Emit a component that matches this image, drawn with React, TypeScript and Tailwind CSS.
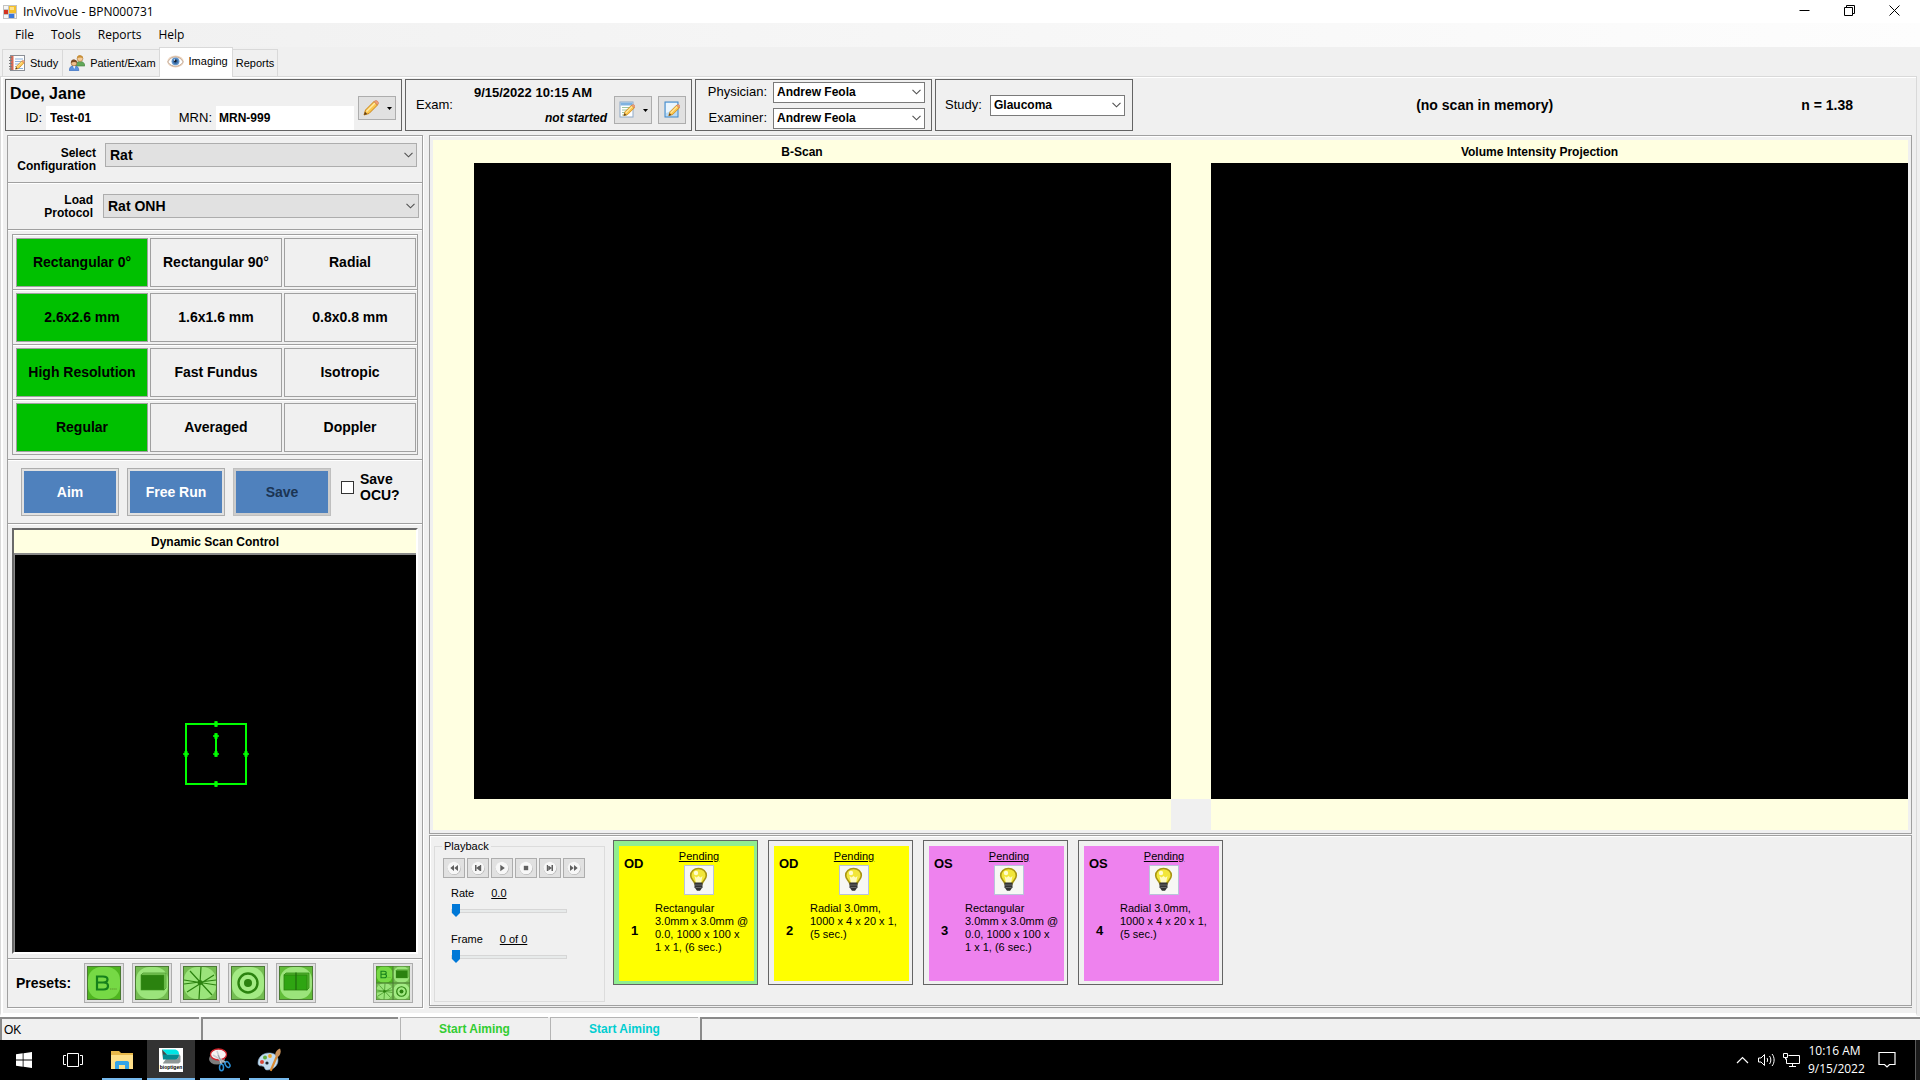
import React from "react";

const UI = "font-['Liberation_Sans',Arial,sans-serif]";
const SEGOE = "font-['Open_Sans','Noto_Sans',sans-serif]";

/* ---------- Icons ---------- */

function AppIcon() {
  return (
    <svg width="14" height="14" viewBox="0 0 14 14" aria-hidden="true">
      <rect width="14" height="14" fill="#c3c3c3" />
      <rect x="1" y="1" width="4" height="3" fill="#f6f6f6" />
      <rect x="1" y="10" width="4" height="3" fill="#f6f6f6" />
      <rect x="1" y="5" width="4" height="4" fill="#d3331f" />
      <rect x="6" y="1" width="7" height="7" fill="#f5c02b" />
      <rect x="7" y="2" width="4" height="3" fill="#ffe28a" />
      <rect x="6" y="9" width="5" height="4" fill="#3b78dd" />
      <rect x="12" y="9" width="1" height="4" fill="#f6f6f6" />
    </svg>
  );
}

function Pencil({ x = 0, y = 0, s = 1 }: { x?: number; y?: number; s?: number }) {
  return (
    <g transform={`translate(${x} ${y}) scale(${s})`}>
      <path d="M1 15l1.500-5L11 1.500 14.500 5 6 13.500z" fill="#fbc64d" stroke="#c98317" strokeWidth="1" strokeLinejoin="round" />
      <path d="M3.500 11.500L12 3" stroke="#ffeaa8" strokeWidth="1.400" />
      <path d="M11 1.500L14.500 5l1-1.600c.4-1-1.700-3.200-2.800-2.800z" fill="#f1a07a" stroke="#c9774b" strokeWidth=".6" />
      <path d="M1 15l1-3.200L4.200 14z" fill="#5a3d1c" />
    </g>
  );
}

function PencilIcon() {
  return (
    <svg width="16" height="16" viewBox="0 0 16 16" aria-hidden="true">
      <Pencil />
    </svg>
  );
}

function StudyIcon() {
  return (
    <svg width="16" height="16" viewBox="0 0 16 16" aria-hidden="true">
      <rect x="1.500" y=".5" width="14" height="15" fill="#fdfdfd" stroke="#8b8f96" />
      <rect x="2" y="1" width="2.500" height="14" fill="#d66a55" />
      <path d="M0 2.500h3M0 5.500h3M0 8.500h3M0 11.500h3M0 14h3" stroke="#7a7a7a" />
      <path d="M6 4h8M6 6.500h8M6 9h7M6 11.500h6M6 13.500h8" stroke="#7fa9d8" strokeWidth=".9" />
      <Pencil x={6} y={5} s={0.62} />
    </svg>
  );
}

function PeopleIcon() {
  return (
    <svg width="16" height="16" viewBox="0 0 16 16" aria-hidden="true">
      <path d="M6.500 11c0-3 1.500-4.500 4.500-4.500s4.800 1.500 4.800 4.500z" fill="#62a85a" stroke="#3f7d3a" strokeWidth=".6" />
      <circle cx="11" cy="3.600" r="2.900" fill="#f3cb98" stroke="#a8773c" strokeWidth=".6" />
      <path d="M8 3.500C8 .8 9.800.3 11 .3s3 .7 3 3c-1.500-1-4-1.300-6 .2z" fill="#c98f35" />
      <path d="M.3 15.700c0-3.500 1.600-5 4.700-5s4.800 1.500 4.800 5z" fill="#5a92e0" stroke="#2f62b5" strokeWidth=".6" />
      <path d="M4 11l1.200 3L6.500 11z" fill="#fff" />
      <circle cx="5" cy="8" r="2.900" fill="#f0bf8b" stroke="#8a5a2c" strokeWidth=".6" />
      <path d="M2 8c0-3 1.700-3.400 3-3.400s3 .6 3 3.200c-1.500-1-4-1.200-6 .2z" fill="#7a4a24" />
    </svg>
  );
}

function EyeIcon() {
  return (
    <svg width="17" height="13" viewBox="0 0 17 13" aria-hidden="true">
      <ellipse cx="8.500" cy="6.500" rx="8.200" ry="6" fill="#ecd3bd" />
      <path d="M.8 7C3 3.200 5.500 2 8.500 2s6 1.500 7.700 5c-2 3-4.700 4.200-7.700 4.200S2.800 10 .8 7z" fill="#fff" stroke="#b59a85" strokeWidth=".8" />
      <circle cx="8.500" cy="6.300" r="3.900" fill="#5f93c9" />
      <circle cx="8.500" cy="6.300" r="2.600" fill="#3d6ea8" />
      <circle cx="8.300" cy="6.100" r="1.400" fill="#0d1b2c" />
      <circle cx="7.400" cy="5" r=".7" fill="#fff" />
    </svg>
  );
}

function FormIcon({ blue = false }: { blue?: boolean }) {
  return (
    <svg width="16" height="18" viewBox="0 0 16 18" aria-hidden="true">
      <rect x="1" y="1" width="13" height="15" fill={blue ? "#b9dbf6" : "#fff"} stroke={blue ? "#3f87c9" : "#8faac8"} />
      {blue ? (
        <path d="M2 2h11v6L2 12z" fill="#eaf5fd" />
      ) : (
        <>
          <rect x="1.500" y="1.500" width="12" height="3" fill="#7fb2e0" />
          <path d="M3 6.500h9M3 9h9M3 11.500h7M3 14h5" stroke="#9cc4a0" />
        </>
      )}
      <Pencil x={4} y={3} s={0.78} />
    </svg>
  );
}

function DownCaret() {
  return (
    <svg width="5" height="3" viewBox="0 0 5 3" aria-hidden="true">
      <path d="M0 0h5L2.500 3z" fill="#000" />
    </svg>
  );
}

function Bulb() {
  return (
    <svg width="30" height="30" viewBox="0 0 30 30" aria-hidden="true">
      <rect width="30" height="30" fill="#b9c3da" />
      <rect width="28" height="28" x="1" y="1" fill="#f7f7f4" />
      <path d="M14.500 3.500c-4.600 0-7.800 3-7.800 7 0 3.700 3.600 5 4.300 8.500h7c.7-3.500 4.300-4.800 4.300-8.500 0-4-3.200-7-7.800-7z" fill="#f2e63a" stroke="#a89412" strokeWidth="1.600" />
      <path d="M12 18l-1.500-7 2 1.500 2-1.500 2 1.500 2-1.500L17 18z" fill="#fffbc0" />
      <circle cx="12" cy="8" r="2.200" fill="#fffcd0" />
      <path d="M10.500 17.500h8v4.800l-2.500 3.400h-3l-2.500-3.400z" fill="#333" />
      <path d="M11 20h7M11.500 22.500h6" stroke="#777" strokeWidth=".8" />
    </svg>
  );
}

type MediaKind = "rew" | "prev" | "play" | "stop" | "next" | "ff";

const mediaPaths: Record<MediaKind, string> = {
  rew: "M7 4v6L3.300 7zM11 4v6L7.300 7z",
  prev: "M4 4h1.500v6H4zM9 4v6L5.300 7zM8.800 4h1.400v6H8.800z",
  play: "M5.300 3.700v6.600L9.800 7z",
  stop: "M4.800 4.800h4.400v4.400H4.800z",
  next: "M10 4H8.500v6H10zM5 4v6L8.700 7zM3.800 4h1.400v6H3.800z",
  ff: "M7 4v6L10.700 7zM3 4v6L6.700 7z",
};

function MediaIcon({ kind }: { kind: MediaKind }) {
  return (
    <svg width="14" height="14" viewBox="0 0 14 14" aria-hidden="true">
      <circle cx="7.300" cy="7.500" r="6.500" fill="#b4b4b4" />
      <circle cx="7" cy="7" r="6.300" fill="#f7f7f7" />
      <path d={mediaPaths[kind]} fill="#606060" />
    </svg>
  );
}

/* ---------- Preset drawings, each on a 34 unit square ---------- */

function PresetBase({ bg, disc, children }: { bg: string; disc: string; children: React.ReactNode }) {
  return (
    <>
      <rect width="34" height="34" fill={bg} />
      <rect x="1" y="1" width="32" height="32" rx="13" fill={disc} />
      {children}
      <rect x=".5" y=".5" width="33" height="33" fill="none" stroke="#4a7a33" />
    </>
  );
}

function BArt() {
  return (
    <PresetBase bg="#4fb520" disc="#76d945">
      <path d="M10 10.500h6c6 0 6 6 0 6h-6zM10 16.500h6.500c6 0 6 7 0 7H10z" fill="none" stroke="#15801b" strokeWidth="2.200" />
      <path d="M23 23h7" stroke="#5e9a2c" strokeDasharray="1.500 .6" />
    </PresetBase>
  );
}

function VolumeArt() {
  return (
    <PresetBase bg="#74bd52" disc="#9be47b">
      <path d="M6 9l2-2h23v15l-2 2z" fill="#7dcc5b" stroke="#4f9a31" strokeWidth=".8" />
      <rect x="6" y="9" width="23" height="15" fill="#2b820f" stroke="#3f9320" strokeWidth=".6" />
    </PresetBase>
  );
}

function RadialArt() {
  return (
    <PresetBase bg="#74bd52" disc="#9be47b">
      <path d="M18 1l-2 32M7 5l22 24M31 9L4 26M1 14l32 5M1 18l32-4" stroke="#2b820f" strokeWidth="1.200" />
      <circle cx="17" cy="16.500" r="2.500" fill="#2b820f" />
    </PresetBase>
  );
}

function RingArt() {
  return (
    <PresetBase bg="#74bd52" disc="#a3ea84">
      <circle cx="17" cy="17" r="9.500" fill="none" stroke="#2b820f" strokeWidth="2.400" />
      <circle cx="17" cy="17" r="4" fill="#2b820f" />
    </PresetBase>
  );
}

function SplitArt() {
  return (
    <PresetBase bg="#62bd3a" disc="#9be47b">
      <path d="M5 9l2-2h23v15l-2 2z" fill="#54b52f" stroke="#2f8a12" strokeWidth=".8" />
      <rect x="5" y="9" width="23" height="15" fill="#2fa512" stroke="#2b820f" strokeWidth=".8" />
      <path d="M17 6.500V24" stroke="#1f6a0c" strokeWidth="1.200" />
    </PresetBase>
  );
}

function GridArt() {
  return (
    <>
      <svg x="0" y="0" width="17" height="17" viewBox="0 0 34 34"><BArt /></svg>
      <svg x="17" y="0" width="17" height="17" viewBox="0 0 34 34"><VolumeArt /></svg>
      <svg x="0" y="17" width="17" height="17" viewBox="0 0 34 34"><RadialArt /></svg>
      <svg x="17" y="17" width="17" height="17" viewBox="0 0 34 34"><RingArt /></svg>
    </>
  );
}

function PresetButton({ label, children }: { label: string; children: React.ReactNode }) {
  return (
    <button aria-label={label} className="flex size-10 items-center justify-center border border-[#adadad] bg-[#e1e1e1]">
      <svg width="34" height="34" viewBox="0 0 34 34" aria-hidden="true">{children}</svg>
    </button>
  );
}

/* ---------- Controls ---------- */

function DropDown({ id, value, look }: { id: string; value: string; look: "flat" | "field" }) {
  return (
    <div className="relative w-full">
      <select
        id={id}
        defaultValue={value}
        className={
          look === "flat"
            ? "block h-6 w-full appearance-none rounded-none border border-[#adadad] bg-[#e1e1e1] pl-1 pr-5 text-[14px] leading-[20px] font-bold text-black"
            : "block h-[21px] w-full appearance-none rounded-none border border-[#7a7a7a] bg-white pl-[3px] pr-5 text-[12px] leading-[16px] font-bold text-black"
        }
      >
        <option>{value}</option>
      </select>
      <svg className="pointer-events-none absolute inset-y-0 right-1 my-auto" width="9" height="6" viewBox="0 0 9 6" aria-hidden="true">
        <path d="M.5 .8l4 4 4-4" fill="none" stroke="#505050" strokeWidth="1.100" />
      </svg>
    </div>
  );
}

const SLIDER =
  "block h-[14px] w-[116px] appearance-none bg-transparent [&::-webkit-slider-runnable-track]:h-1 [&::-webkit-slider-runnable-track]:border [&::-webkit-slider-runnable-track]:border-[#d6d6d6] [&::-webkit-slider-runnable-track]:bg-[#e7eaea] [&::-webkit-slider-thumb]:-mt-[6px] [&::-webkit-slider-thumb]:h-[13px] [&::-webkit-slider-thumb]:w-2 [&::-webkit-slider-thumb]:appearance-none [&::-webkit-slider-thumb]:bg-[#0078d7] [&::-webkit-slider-thumb]:[clip-path:polygon(0_0,100%_0,100%_70%,50%_100%,0_70%)]";

const modeRows = [
  ["Rectangular 0°", "Rectangular 90°", "Radial"],
  ["2.6x2.6 mm", "1.6x1.6 mm", "0.8x0.8 mm"],
  ["High Resolution", "Fast Fundus", "Isotropic"],
  ["Regular", "Averaged", "Doppler"],
];

const mediaButtons: { kind: MediaKind; label: string }[] = [
  { kind: "rew", label: "Rewind" },
  { kind: "prev", label: "Previous frame" },
  { kind: "play", label: "Play" },
  { kind: "stop", label: "Stop" },
  { kind: "next", label: "Next frame" },
  { kind: "ff", label: "Fast forward" },
];

const rectScan = ["Rectangular", "3.0mm x 3.0mm @", "0.0, 1000 x 100 x", "1 x 1, (6 sec.)"];
const radialScan = ["Radial 3.0mm,", "1000 x 4 x 20 x 1,", "(5 sec.)"];

const scans = [
  { n: 1, eye: "OD", lines: rectScan, active: true },
  { n: 2, eye: "OD", lines: radialScan, active: false },
  { n: 3, eye: "OS", lines: rectScan, active: false },
  { n: 4, eye: "OS", lines: radialScan, active: false },
];

/* ---------- Window chrome ---------- */

function TitleBar() {
  return (
    <header className={`flex h-[23px] items-center bg-white pl-[3px] text-[12px] leading-[16px] ${SEGOE}`}>
      <AppIcon />
      <h1 className="ml-[6px]">InVivoVue - BPN000731</h1>
      <div className="ml-auto flex h-[21px] items-center self-start pr-[3px]">
        <button aria-label="Minimize" className="flex h-full w-[45px] items-center justify-center">
          <svg width="11" height="11" viewBox="0 0 11 11"><path d="M.5 5.500h10" stroke="#000" /></svg>
        </button>
        <button aria-label="Restore" className="flex h-full w-[45px] items-center justify-center">
          <svg width="11" height="11" viewBox="0 0 11 11"><path d="M.5 2.500h8v8h-8zM2.500 2.500v-2h8v8h-2" fill="none" stroke="#000" /></svg>
        </button>
        <button aria-label="Close" className="flex h-full w-[45px] items-center justify-center">
          <svg width="11" height="11" viewBox="0 0 11 11"><path d="M.5.5l10 10M10.500.5l-10 10" stroke="#000" /></svg>
        </button>
      </div>
    </header>
  );
}

function MenuBar() {
  return (
    <nav className={`flex h-6 items-center gap-[17px] bg-linear-to-r from-[#f0f0f0] to-[#fdfdfd] pl-[15px] text-[12px] leading-[16px] ${SEGOE}`}>
      {["File", "Tools", "Reports", "Help"].map((m) => (
        <button key={m}>{m}</button>
      ))}
    </nav>
  );
}

function TabBar() {
  const tab = "flex h-[27px] items-center border border-b-0 border-[#d9d9d9] bg-[#f0f0f0]";
  return (
    <div role="tablist" className="flex h-[29px] items-end pl-[2px] text-[11px] leading-[14px]">
      <button role="tab" className={`${tab} gap-[5px] border-r-0 pl-[6px] pr-[4px]`}><StudyIcon />Study</button>
      <button role="tab" className={`${tab} gap-[5px] border-r-0 pl-[6px] pr-[3px]`}><PeopleIcon />Patient/Exam</button>
      <button role="tab" aria-selected="true" className="relative -mb-px flex h-[30px] items-center gap-[5px] border border-b-0 border-[#d9d9d9] bg-white pr-[4px] pl-[7px] pb-[3px]"><EyeIcon />Imaging</button>
      <button role="tab" className={`${tab} border-l-0 px-[3px]`}>Reports</button>
    </div>
  );
}

/* ---------- Header strip ---------- */

function ExamHeader() {
  const box = "flex h-[52px] shrink-0 border border-[#646464]";
  const tool = "flex shrink-0 items-center justify-center border border-[#adadad] bg-[#e1e1e1]";
  return (
    <div className="flex items-center gap-[3px] text-[13px] leading-[16px]">
      <section className={`${box} w-[397px] items-center justify-between pr-[5px]`}>
        <div className="flex h-full flex-col justify-between">
          <h2 className="pl-[4px] pt-[4px] text-[16px] leading-[20px] font-bold">Doe, Jane</h2>
          <div className="flex h-6 items-center">
            <label htmlFor="pid" className="w-[40px] pr-1 text-right">ID:</label>
            <input id="pid" defaultValue="Test-01" className="h-6 w-[124px] bg-white px-1 text-[12px] font-bold" />
            <label htmlFor="mrn" className="w-[46px] pr-1 text-right">MRN:</label>
            <input id="mrn" defaultValue="MRN-999" className="h-6 w-[138px] bg-white px-[3px] text-[12px] font-bold" />
          </div>
        </div>
        <button aria-label="Edit patient" className={`${tool} mt-[6px] h-6 w-[38px] gap-[8px]`}><PencilIcon /><DownCaret /></button>
      </section>
      <section className={`${box} w-[287px] items-center pl-[10px] pr-[5px]`}>
        <span>Exam:</span>
        <div className="flex flex-1 flex-col items-end pr-[7px]">
          <strong className="mr-[15px]">9/15/2022 10:15 AM</strong>
          <strong className="mt-[9px] text-[12px] italic">not started</strong>
        </div>
        <div className="flex gap-[6px] pt-[10px]">
          <button aria-label="Exam options" className={`${tool} h-7 w-[38px] gap-[8px]`}><FormIcon /><DownCaret /></button>
          <button aria-label="Edit exam" className={`${tool} h-7 w-7`}><FormIcon blue /></button>
        </div>
      </section>
      <section className={`${box} w-[237px] flex-col justify-center gap-[5px] pr-[6px]`}>
        <div className="flex items-center">
          <label htmlFor="physician" className="w-[77px] shrink-0 pr-[6px] text-right">Physician:</label>
          <DropDown id="physician" value="Andrew Feola" look="field" />
        </div>
        <div className="flex items-center">
          <label htmlFor="examiner" className="w-[77px] shrink-0 pr-[6px] text-right">Examiner:</label>
          <DropDown id="examiner" value="Andrew Feola" look="field" />
        </div>
      </section>
      <section className={`${box} w-[198px] items-center pl-[9px] pr-[7px]`}>
        <label htmlFor="study" className="w-[45px] shrink-0">Study:</label>
        <DropDown id="study" value="Glaucoma" look="field" />
      </section>
      <div className="flex flex-1 items-center text-[14px] font-bold">
        <p className="flex-1 pl-8 text-center">(no scan in memory)</p>
        <p className="pr-[59px]">n = 1.38</p>
      </div>
    </div>
  );
}

/* ---------- Left column ---------- */

function ScanPattern() {
  return (
    <svg width="66" height="66" viewBox="0 0 66 66" role="img" aria-label="Scan pattern">
      <rect x="3" y="3" width="60" height="60" fill="none" stroke="#00ff00" strokeWidth="2" />
      <path d="M33 15v18" stroke="#00ff00" strokeWidth="2" />
      {[[33, 3], [33, 63], [3, 33], [63, 33], [33, 15], [33, 33]].map(([x, y]) => (
        <path key={`${x}-${y}`} d={`M${x - 3} ${y}h6M${x} ${y - 3}v6M${x - 1} ${y - 2}h2v4h-2z`} fill="#00ff00" stroke="#00ff00" strokeWidth="1.300" />
      ))}
    </svg>
  );
}

function ControlColumn() {
  const part = "border-b border-[#a0a0a0] shadow-[inset_0_1px_0_#fff]";
  const run = "h-12 flex-1 border p-[2px]";
  return (
    <aside className="flex w-[416px] shrink-0 flex-col border border-b-0 border-[#a0a0a0] shadow-[1px_1px_0_#fff]">
      <div className={`${part} flex h-[47px] items-start pt-[7px] pr-[5px]`}>
        <label htmlFor="config" className="w-[97px] shrink-0 pr-[9px] pt-[4px] text-right text-[12px] leading-[13px] font-bold">Select Configuration</label>
        <DropDown id="config" value="Rat" look="flat" />
      </div>
      <div className={`${part} flex h-[47px] items-start pt-[11px] pr-[3px]`}>
        <label htmlFor="protocol" className="w-[95px] shrink-0 pl-7 pr-[10px] text-right text-[12px] leading-[13px] font-bold">Load Protocol</label>
        <DropDown id="protocol" value="Rat ONH" look="flat" />
      </div>
      <div className={`${part} p-[4px]`}>
        <div className="border border-[#a0a0a0]">
          {modeRows.map((row, r) => (
            <div key={row[0]} className={`grid grid-cols-3 gap-[2px] pr-px pl-[3px] pt-[3px] pb-[2px] shadow-[inset_0_1px_0_#fff] ${r < 3 ? "border-b border-[#a0a0a0]" : ""}`}>
              {row.map((m, c) => (
                <button
                  key={m}
                  aria-pressed={c === 0}
                  className={`h-[49px] border border-[#a0a0a0] pb-[2px] text-[14px] leading-[18px] font-bold whitespace-nowrap ${c === 0 ? "bg-[#00c000]" : "bg-[#f0f0f0]"}`}
                >
                  {m}
                </button>
              ))}
            </div>
          ))}
        </div>
      </div>
      <div className={`${part} flex h-16 pt-2 pl-[13px] text-[14px] font-bold`}>
        <div className="flex w-[310px] gap-2">
          <button className={`${run} border-[#adadad] bg-[#e1e1e1]`}><span className="flex h-full items-center justify-center bg-[#4f81bd] text-white">Aim</span></button>
          <button className={`${run} border-[#adadad] bg-[#e1e1e1]`}><span className="flex h-full items-center justify-center bg-[#4f81bd] text-white">Free Run</span></button>
          <button disabled className={`${run} border-[#bfbfbf] bg-[#cccccc]`}><span className="flex h-full items-center justify-center bg-[#4f81bd] text-[#1b3453]">Save</span></button>
        </div>
        <label className="ml-[10px] flex items-start gap-[6px] pt-[3px] leading-[16px]">
          <input type="checkbox" className="mt-[10px] size-[13px] shrink-0 appearance-none border border-[#333] bg-white checked:bg-[#0078d7]" />
          <span>Save<br />OCU?</span>
        </label>
      </div>
      <div className={`${part} flex flex-1 flex-col p-[4px]`}>
        <div className="flex flex-1 flex-col border-2 border-t-[#696969] border-r-white border-b-white border-l-[#696969] bg-[#f0f0f0]">
          <h3 className="bg-[#ffffe1] pt-[2px] text-center text-[12px] leading-[21px] font-bold">Dynamic Scan Control</h3>
          <div className="flex flex-1 items-center justify-center border-t-2 border-l border-[#8a8a8a] bg-black">
            <ScanPattern />
          </div>
        </div>
      </div>
      <div className={`${part} flex h-[49px] items-center pr-[9px] pl-2`}>
        <span className="w-[68px] text-[14px] font-bold">Presets:</span>
        <div className="flex gap-2">
          <PresetButton label="B-scan preset"><BArt /></PresetButton>
          <PresetButton label="Volume preset"><VolumeArt /></PresetButton>
          <PresetButton label="Radial preset"><RadialArt /></PresetButton>
          <PresetButton label="Annular preset"><RingArt /></PresetButton>
          <PresetButton label="Mixed preset"><SplitArt /></PresetButton>
        </div>
        <div className="ml-auto"><PresetButton label="All presets"><GridArt /></PresetButton></div>
      </div>
    </aside>
  );
}

/* ---------- Viewer ---------- */

function Viewer() {
  const heading = "pt-[2px] text-center text-[12px] leading-[21px] font-bold";
  return (
    <div className="flex flex-1 px-[3px] pt-1 pb-[3px]">
      <section className="flex flex-1 flex-col bg-[#ffffe1] pb-[31px]">
        <h3 className={heading}>B-Scan</h3>
        <div className="ml-[41px] flex-1 bg-black" />
      </section>
      <div className="flex w-10 flex-col">
        <div className="flex-1 bg-[#ffffe1]" />
        <div className="h-[31px]" />
      </div>
      <section className="flex w-[697px] flex-col bg-[#ffffe1] pb-[31px]">
        <h3 className={`${heading} pr-[40px]`}>Volume Intensity Projection</h3>
        <div className="flex-1 bg-black" />
      </section>
    </div>
  );
}

function Playback() {
  return (
    <fieldset className="h-[162px] w-[171px] border border-[#dcdcdc] text-[11px] leading-[13px]">
      <legend className="ml-[7px] px-[2px]">Playback</legend>
      <div className="flex gap-[2px] pt-[5px] pl-2">
        {mediaButtons.map((b) => (
          <button key={b.kind} aria-label={b.label} className="flex h-5 w-[22px] items-center justify-center border border-[#adadad] bg-[#e1e1e1]">
            <MediaIcon kind={b.kind} />
          </button>
        ))}
      </div>
      <div className="pt-[9px] pl-4">
        <div className="flex gap-[17px] pb-1">
          <label htmlFor="rate">Rate</label>
          <output className="underline">0.0</output>
        </div>
        <input id="rate" type="range" defaultValue={0} className={SLIDER} />
      </div>
      <div className="pt-[15px] pl-4">
        <div className="flex gap-[17px] pb-1">
          <label htmlFor="frame">Frame</label>
          <output className="underline">0 of 0</output>
        </div>
        <input id="frame" type="range" defaultValue={0} className={SLIDER} />
      </div>
    </fieldset>
  );
}

function ScanCard({ n, eye, lines, active }: { n: number; eye: string; lines: string[]; active: boolean }) {
  return (
    <article className={`size-[145px] border border-[#646464] pt-[5px] pr-[3px] pb-[3px] pl-[5px] ${active ? "bg-[#90ee90]" : "bg-[#f0f0f0]"}`}>
      <div className={`flex h-full ${eye === "OD" ? "bg-[#ffff00]" : "bg-[#ee82ee]"}`}>
        <div className="flex w-[36px] flex-col pt-[10px] text-[13px] leading-[16px] font-bold">
          <span className="pl-[5px]">{eye}</span>
          <span className="mt-[51px] pl-[12px]">{n}</span>
        </div>
        <div className="flex flex-col pt-[4px] text-[11px] leading-[13px] whitespace-nowrap">
          <a href="#pending" className="w-[88px] text-center underline">Pending</a>
          <div className="mt-[2px] ml-[29px]"><Bulb /></div>
          <p className="mt-[7px]">
            {lines.map((l) => (
              <span key={l} className="block">{l}</span>
            ))}
          </p>
        </div>
      </div>
    </article>
  );
}

/* ---------- Status bar and taskbar ---------- */

function StatusBar() {
  const sunken = "flex items-center border-t-2 border-l-2 border-t-[#8a8a8a] border-l-[#8a8a8a] pl-[2px]";
  return (
    <footer className="flex h-[23px] gap-[2px] text-[12px] leading-[14px]">
      <div className={`${sunken} w-[199px]`}>OK</div>
      <div className={`${sunken} w-[197px]`} />
      <div className="flex w-[148px] items-center justify-center border-t border-l border-[#b4b4b4] font-bold text-[#32cd32]">Start Aiming</div>
      <div className="flex w-[148px] items-center justify-center border-t border-l border-[#b4b4b4] font-bold text-[#00ced1]">Start Aiming</div>
      <div className={`${sunken} flex-1`} />
    </footer>
  );
}

function TaskButton({ label, state, children }: { label: string; state: "idle" | "open" | "active"; children: React.ReactNode }) {
  return (
    <button aria-label={label} className={`relative flex h-10 w-12 items-center justify-center ${state === "active" ? "bg-[#333]" : ""}`}>
      {children}
      {state !== "idle" && <span className={`absolute bottom-0 h-[2px] bg-[#76b9ed] ${state === "active" ? "inset-x-0" : "inset-x-1"}`} />}
    </button>
  );
}

function Taskbar() {
  return (
    <div className={`flex h-10 items-center gap-px bg-black text-white ${SEGOE}`}>
      <TaskButton label="Start" state="idle">
        <svg width="16" height="16" viewBox="0 0 16 16"><path d="M0 2.200L6.700 1.300v6.300H0zM7.500 1.200L16 0v7.600H7.500zM0 8.400h6.700v6.300L0 13.800zM7.500 8.400H16V16l-8.500-1.200z" fill="#fff" /></svg>
      </TaskButton>
      <TaskButton label="Task view" state="idle">
        <svg width="20" height="14" viewBox="0 0 20 14"><path d="M4.500.5h11v13h-11zM3 2.500H.5v9H3M17 2.500h2.500v9H17" fill="none" stroke="#fff" /></svg>
      </TaskButton>
      <TaskButton label="File Explorer" state="open">
        <svg width="22" height="18" viewBox="0 0 22 18">
          <path d="M0 0h8l2 2h12v16H0z" fill="#e8b84a" />
          <path d="M0 4h22v14H0z" fill="#ffe08a" />
          <path d="M4 18v-7l1.500-1h11l1.500 1v7h-4v-4H8v4z" fill="#35a4e8" />
        </svg>
      </TaskButton>
      <TaskButton label="Bioptigen" state="active">
        <svg width="24" height="24" viewBox="0 0 24 24">
          <rect width="24" height="24" fill="#fff" />
          <path d="M4 15l3-4h10c2 0 3-2 3-5l1.500 2v6l-2 1.500H4z" fill="#8f9696" />
          <path d="M3 1.500h12c4 0 5 2.500 5 5H8z" fill="#00e5e5" />
          <path d="M3 1.500l5 5L4 11z" fill="#3a4a4a" />
          <path d="M4 6.500h16c0 4-2 5-5 5H4z" fill="#068a92" />
          <text x="12" y="21" textAnchor="middle" fontFamily="Liberation Sans" fontSize="5" fontWeight="bold" fill="#000">bioptigen</text>
        </svg>
      </TaskButton>
      <TaskButton label="Snipping Tool" state="open">
        <svg width="22" height="24" viewBox="0 0 22 24">
          <ellipse cx="8" cy="11" rx="8" ry="5.500" fill="#7c7c7c" />
          <ellipse cx="9.500" cy="6.500" rx="8" ry="5.500" fill="#f6f2f2" stroke="#d0242c" strokeWidth="1.300" />
          <path d="M4 7l13 8M8 3l4.500 13" stroke="#c9ced3" strokeWidth="1.600" />
          <path d="M9 7l4 8M10 10l6 5" stroke="#8b949b" strokeWidth=".8" />
          <ellipse cx="12.500" cy="19.500" rx="2" ry="3.200" fill="none" stroke="#2a8fd6" strokeWidth="1.500" />
          <ellipse cx="18.500" cy="16.500" rx="2" ry="3.200" fill="none" stroke="#2a8fd6" strokeWidth="1.500" transform="rotate(-35 18.500 16.500)" />
        </svg>
      </TaskButton>
      <TaskButton label="Paint" state="open">
        <svg width="24" height="24" viewBox="0 0 24 24">
          <path d="M1 15C1 9 6 5 12 5c5 0 9 2.500 9 7 0 6-5 10-11 10-2.500 0-2-2.500-3.500-3.500S1 19 1 15z" fill="#c4ddf0" stroke="#7fa5c4" strokeWidth=".6" />
          <circle cx="5" cy="14" r="2" fill="#d8483a" />
          <circle cx="8" cy="9.500" r="2" fill="#5fae3f" />
          <circle cx="13" cy="8" r="1.900" fill="#f0a62b" />
          <circle cx="10" cy="15" r="1.600" fill="#1c2630" />
          <path d="M14 22L20 8" stroke="#d98a33" strokeWidth="2.200" strokeLinecap="round" />
          <path d="M18.500 8c-1-3 1-6 4.500-7.500 1.500 3 .5 6.500-2.200 8.500z" fill="#c9915b" />
        </svg>
      </TaskButton>
      <div className="ml-auto flex h-full items-center">
        <svg width="13" height="8" viewBox="0 0 13 8" className="mr-[9px]"><path d="M1 7l5.500-5.500L12 7" fill="none" stroke="#fff" strokeWidth="1.200" /></svg>
        <svg width="17" height="14" viewBox="0 0 17 14" className="mr-2"><path d="M.5 5h2.500L6.500 1.500v11L3 9H.5zM9 5c.8 1 .8 3 0 4M11.500 3c1.800 2 1.800 6 0 8M14 1c2.800 3 2.800 9 0 12" fill="none" stroke="#fff" /></svg>
        <svg width="17" height="14" viewBox="0 0 17 14" className="mr-[8px]"><path d="M5.500 2.500h11v8H3.500v-5M6 13.500h7M9.500 10.500v3M.5.500h4v4h-4zM2.500 4.500v2" fill="none" stroke="#fff" /></svg>
        <time className="w-[53px] text-center text-[12px] leading-[18px] whitespace-nowrap">10:16 AM<br />9/15/2022</time>
        <button aria-label="Notifications" className="mr-[19px] ml-[17px]">
          <svg width="18" height="18" viewBox="0 0 18 18"><path d="M1 1.500h16v12h-5.500L9 16l-2.500-2.500H1z" fill="none" stroke="#fff" strokeWidth="1.200" /></svg>
        </button>
        <div className="h-full w-[5px] border-l border-[#5a5a5a] bg-[#1a1a1a]" />
      </div>
    </div>
  );
}

export default function App() {
  return (
    <div className={`flex min-h-screen flex-col bg-[#f0f0f0] text-black ${UI}`}>
      <TitleBar />
      <MenuBar />
      <TabBar />
      <main className="mr-[3px] flex flex-1 flex-col border border-b-[3px] border-t-[#d9d9d9] border-r-[#d9d9d9] border-b-white border-l-[#d9d9d9] pt-[2px] pr-[4px] pb-[5px] pl-1 shadow-[inset_2px_1px_0_#fff]">
        <ExamHeader />
        <div className="flex flex-1 gap-[6px] pt-1 pl-[2px]">
          <ControlColumn />
          <div className="flex min-w-0 flex-1 flex-col">
            <div className="flex flex-1 flex-col border border-[#a0a0a0] shadow-[inset_0_1px_0_#fff]">
              <Viewer />
            </div>
            <div className="mt-px border border-[#a0a0a0] shadow-[inset_1px_1px_0_#fff]">
              <div className="flex h-[169px] gap-2 pt-1 pl-1">
                <Playback />
                <div className="flex gap-[10px]">
                  {scans.map((s) => (
                    <ScanCard key={s.n} {...s} />
                  ))}
                </div>
              </div>
            </div>
            <div className="mt-px border-b border-[#a0a0a0]" />
          </div>
        </div>
      </main>
      <div className="border-t border-white">
        <StatusBar />
      </div>
      <Taskbar />
    </div>
  );
}
